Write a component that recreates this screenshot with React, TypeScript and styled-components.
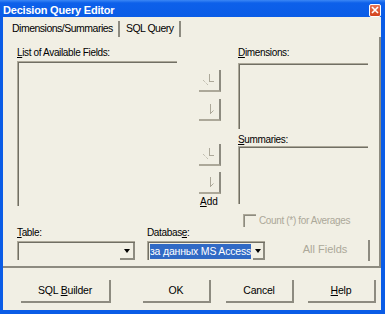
import React from 'react'
import styled, { createGlobalStyle } from 'styled-components'

const GlobalStyle = createGlobalStyle`
  html, body {
    margin: 0;
    padding: 0;
    background: #0a5ce6;
  }
  body {
    font-family: "Liberation Sans", Arial, sans-serif;
  }
`

const face = '#f1efe4'
const dark = '#716f64'
const mid = '#aca899'

const Window = styled.div`
  width: 385px;
  height: 314px;
  display: flex;
  flex-direction: column;
  background: #0a5ce6;
  overflow: hidden;
`

const TitleBar = styled.div`
  height: 17px;
  display: flex;
  align-items: center;
  padding: 0 4px 0 3px;
  box-sizing: border-box;
  background: linear-gradient(#3b87f5 0px, #0d60ea 3px, #0a5ce6 100%);
`

const TitleText = styled.span`
  color: #fff;
  font-weight: bold;
  font-size: 11px;
  letter-spacing: -0.2px;
  padding-top: 2px;
`

const CloseButton = styled.div`
  margin-left: auto;
  margin-top: 3px;
  width: 12px;
  height: 13px;
  box-sizing: border-box;
  border: 1px solid #fff;
  border-radius: 2px;
  background: linear-gradient(#e87555, #d2421c);
  display: flex;
  align-items: center;
  justify-content: center;
`

const Body = styled.div`
  flex: 1;
  margin: 0 4px 4px 3px;
  background: ${face};
  display: flex;
  flex-direction: column;
  color: #000;
`

const TabStrip = styled.div`
  height: 20px;
  display: flex;
  align-items: flex-end;
  padding-left: 3px;
`

const Tab = styled.div`
  height: 16px;
  line-height: 15px;
  font-size: 10.5px;
  letter-spacing: -0.5px;
  padding: 0 5px 0 6px;
  border-right: 2px solid #8d8b80;
`

const Panel = styled.div`
  height: 231px;
  box-sizing: border-box;
  border-right: 2px solid #8d8b80;
  border-bottom: 2px solid #8d8b80;
  padding: 9px 9px 0 14px;
  display: flex;
  flex-direction: column;
`

const TopRow = styled.div`
  display: flex;
  align-items: flex-start;
`

const Column = styled.div<{ $width: number; $left?: number }>`
  width: ${p => p.$width}px;
  margin-left: ${p => p.$left ?? 0}px;
  display: flex;
  flex-direction: column;
`

const FieldLabel = styled.div<{ $gap?: number; $top?: number; $disabled?: boolean }>`
  font-size: 10px;
  line-height: 13px;
  letter-spacing: -0.35px;
  margin-top: ${p => p.$top ?? 0}px;
  margin-bottom: ${p => p.$gap ?? 0}px;
  color: ${p => (p.$disabled ? mid : '#000')};
  white-space: nowrap;
`

const Sunken = styled.div<{ $height: number }>`
  height: ${p => p.$height}px;
  box-sizing: border-box;
  border-top: 1px solid ${mid};
  border-left: 1px solid ${mid};
  box-shadow: inset 1px 1px 0 ${dark};
`

const ArrowColumn = styled.div`
  width: 22px;
  margin-left: 22px;
  margin-top: 24px;
  display: flex;
  flex-direction: column;
`

const ArrowButton = styled.div<{ $gap: number }>`
  width: 22px;
  height: 22px;
  box-sizing: border-box;
  border-right: 2px solid #8d8b80;
  border-bottom: 2px solid ${mid};
  margin-bottom: ${p => p.$gap}px;
`

const AddLabel = styled.div`
  font-size: 10px;
  line-height: 11px;
  padding-left: 1px;
  margin-top: 2px;
`

const CheckRow = styled.div`
  display: flex;
  align-items: center;
  height: 12px;
  margin-top: 7px;
  padding-left: 226px;
  gap: 3px;
`

const CheckBox = styled.div`
  width: 13px;
  height: 13px;
  box-sizing: border-box;
  border-top: 1px solid ${mid};
  border-left: 1px solid ${mid};
  box-shadow: inset 1px 1px 0 #8d8b80;
`

const BottomRow = styled.div`
  display: flex;
  align-items: flex-end;
`

const Field = styled.div<{ $left?: number }>`
  display: flex;
  flex-direction: column;
  margin-left: ${p => p.$left ?? 0}px;
`

const Combo = styled.div`
  width: 118px;
  height: 19px;
  box-sizing: border-box;
  border-top: 1px solid ${mid};
  border-left: 1px solid ${mid};
  box-shadow: inset 1px 1px 0 ${dark};
  display: flex;
  align-items: center;
  padding: 1px 0 1px 2px;
`

const ComboText = styled.div<{ $selected?: boolean }>`
  flex: 1;
  height: 15px;
  white-space: nowrap;
  font-size: 10.5px;
  line-height: 15px;
  letter-spacing: -0.2px;
  margin-right: 2px;
  background: ${p => (p.$selected ? '#316ac5' : 'transparent')};
  color: #fff;
`

const DropButton = styled.div`
  width: 15px;
  height: 17px;
  box-sizing: border-box;
  border-right: 2px solid #8d8b80;
  border-bottom: 2px solid #8d8b80;
  display: flex;
  align-items: center;
  justify-content: center;
`

const Triangle = styled.div`
  width: 0;
  height: 0;
  border-left: 3px solid transparent;
  border-right: 3px solid transparent;
  border-top: 4px solid #000;
  margin-top: 1px;
`

const AllFieldsButton = styled.div`
  margin-left: auto;
  width: 88px;
  height: 21px;
  margin-bottom: -1px;
  box-sizing: border-box;
  border-right: 2px solid #8d8b80;
  color: ${mid};
  font-size: 11px;
  line-height: 19px;
  text-align: center;
`

const ActionRow = styled.div`
  display: flex;
  margin-top: 12px;
  padding-left: 18px;
`

const ActionButton = styled.div<{ $width: number; $left?: number }>`
  width: ${p => p.$width}px;
  height: 23px;
  margin-left: ${p => p.$left ?? 0}px;
  box-sizing: border-box;
  border-right: 2px solid #8d8b80;
  border-bottom: 2px solid #8d8b80;
  font-size: 10.5px;
  line-height: 21px;
  letter-spacing: -0.2px;
  text-align: center;
`

const U = styled.span`
  text-decoration: underline;
`

const MoveAllIcon = () => (
  <svg width="20" height="20" viewBox="0 0 20 20">
    <line x1="10.5" y1="4" x2="10.5" y2="12" stroke={mid} />
    <line x1="10" y1="11.5" x2="15" y2="11.5" stroke={mid} />
    <line x1="4" y1="10" x2="9" y2="15" stroke={mid} strokeDasharray="1 1" />
  </svg>
)

const MoveOneIcon = () => (
  <svg width="20" height="20" viewBox="0 0 20 20">
    <line x1="11.5" y1="5" x2="11.5" y2="15" stroke={mid} />
    <line x1="11.5" y1="14.5" x2="14.5" y2="11.5" stroke={mid} />
  </svg>
)

const App = () => {
  return (
    <Window>
      <GlobalStyle />
      <TitleBar>
        <TitleText>Decision Query Editor</TitleText>
        <CloseButton>
          <svg width="8" height="8" viewBox="0 0 8 8">
            <path d="M1 1 L7 7 M7 1 L1 7" stroke="#fff" strokeWidth="1.6" />
          </svg>
        </CloseButton>
      </TitleBar>
      <Body>
        <TabStrip>
          <Tab>Dimensions/Summaries</Tab>
          <Tab>SQL Query</Tab>
        </TabStrip>
        <Panel>
          <TopRow>
            <Column $width={160}>
              <FieldLabel $gap={2}><U>L</U>ist of Available Fields:</FieldLabel>
              <Sunken $height={145} />
            </Column>
            <ArrowColumn>
              <ArrowButton $gap={7}><MoveAllIcon /></ArrowButton>
              <ArrowButton $gap={23}><MoveOneIcon /></ArrowButton>
              <ArrowButton $gap={6}><MoveAllIcon /></ArrowButton>
              <ArrowButton $gap={0}><MoveOneIcon /></ArrowButton>
              <AddLabel><U>A</U>dd</AddLabel>
            </ArrowColumn>
            <Column $width={130} $left={17}>
              <FieldLabel $gap={4}><U>D</U>imensions:</FieldLabel>
              <Sunken $height={66} />
              <FieldLabel $top={4}><U>S</U>ummaries:</FieldLabel>
              <Sunken $height={58} />
            </Column>
          </TopRow>
          <CheckRow>
            <CheckBox />
            <FieldLabel $disabled>Count (*) for Averages</FieldLabel>
          </CheckRow>
          <BottomRow>
            <Field>
              <FieldLabel $gap={2}><U>T</U>able:</FieldLabel>
              <Combo>
                <ComboText />
                <DropButton><Triangle /></DropButton>
              </Combo>
            </Field>
            <Field $left={12}>
              <FieldLabel $gap={2}>Databas<U>e</U>:</FieldLabel>
              <Combo>
                <ComboText $selected>за данных MS Access</ComboText>
                <DropButton><Triangle /></DropButton>
              </Combo>
            </Field>
            <AllFieldsButton>All Fields</AllFieldsButton>
          </BottomRow>
        </Panel>
        <ActionRow>
          <ActionButton $width={90}>SQL <U>B</U>uilder</ActionButton>
          <ActionButton $width={68} $left={32}>OK</ActionButton>
          <ActionButton $width={68} $left={15}>Cancel</ActionButton>
          <ActionButton $width={68} $left={14}><U>H</U>elp</ActionButton>
        </ActionRow>
      </Body>
    </Window>
  )
}

export default App
